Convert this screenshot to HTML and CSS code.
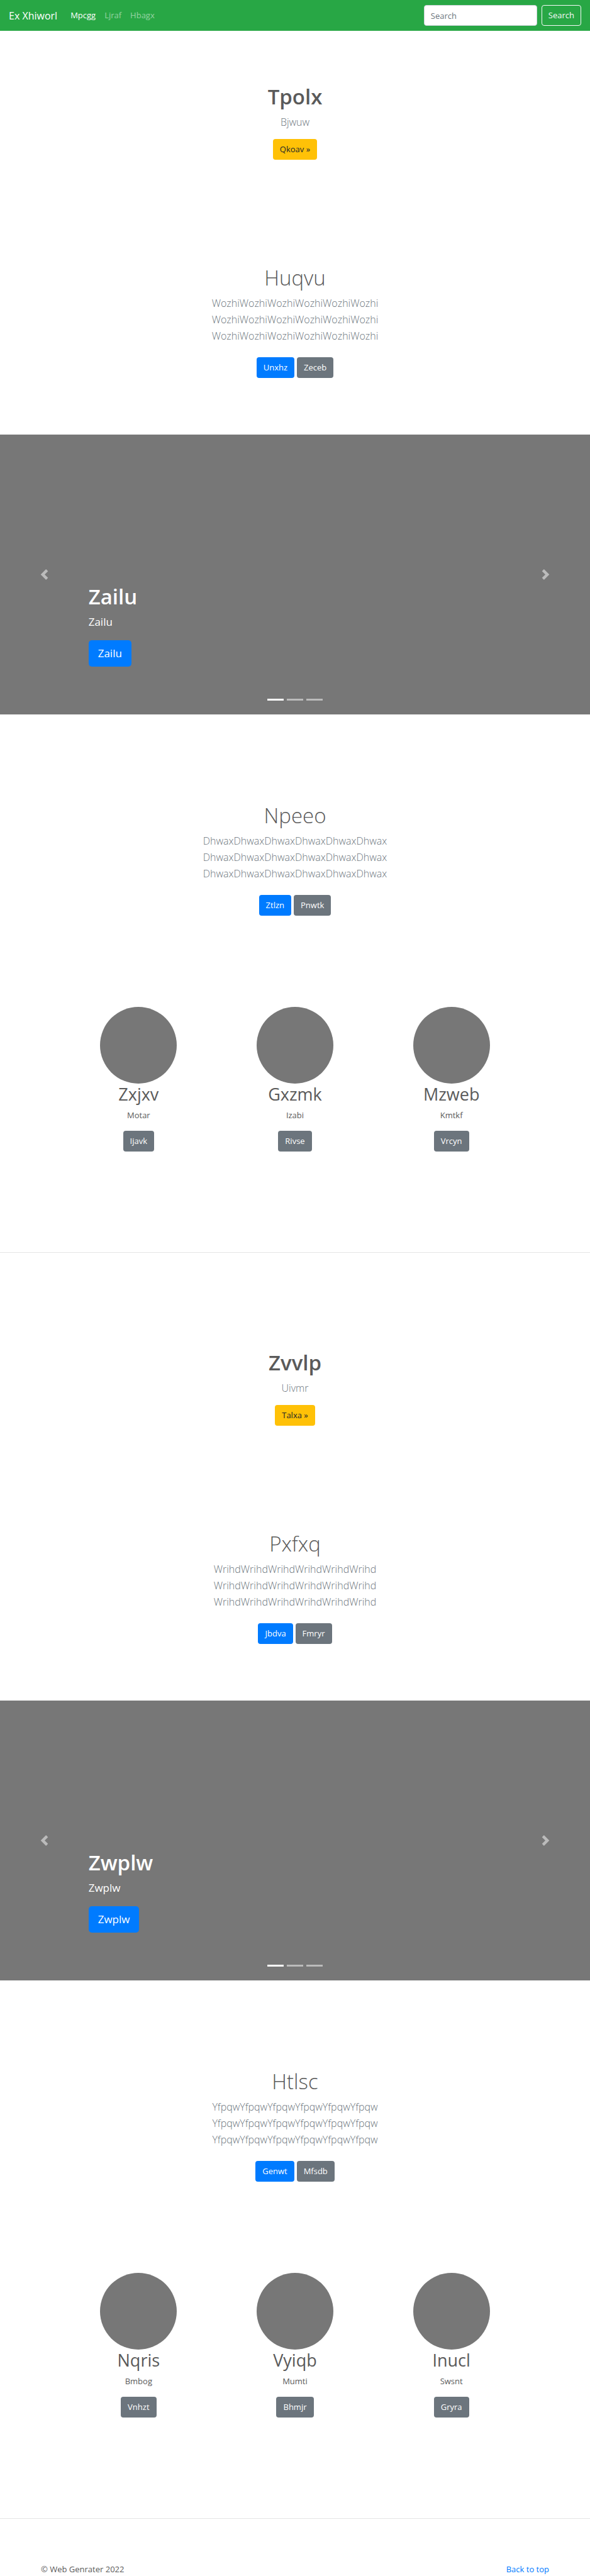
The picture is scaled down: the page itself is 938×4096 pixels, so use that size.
FILE: index.html
```html
<!DOCTYPE html>
<html lang="en">
<head>
<meta charset="utf-8">
<meta name="viewport" content="width=device-width, initial-scale=1">
<title>Ex Xhiworl</title>
<link rel="stylesheet" href="styles.css">
</head>
<body id="top">
<header class="navbar">
  <a class="brand" href="#">Ex Xhiworl</a>
  <nav class="nav-links">
    <a class="nav-link active" href="#">Mpcgg</a>
    <a class="nav-link" href="#">Ljraf</a>
    <a class="nav-link" href="#">Hbagx</a>
  </nav>
  <form class="search">
    <input class="search-input" type="search" placeholder="Search" aria-label="Search">
    <button class="btn btn-outline" type="button">Search</button>
  </form>
</header>
<main>
  <section class="intro">
    <h1 class="title title-strong">Tpolx</h1>
    <p class="lead">Bjwuw</p>
    <div class="actions"><a class="btn btn-warning" href="#">Qkoav »</a></div>
  </section>
  <section class="feature">
    <h2 class="title title-light">Huqvu</h2>
    <p class="lead">WozhiWozhiWozhiWozhiWozhiWozhi<br>WozhiWozhiWozhiWozhiWozhiWozhi<br>WozhiWozhiWozhiWozhiWozhiWozhi</p>
    <div class="actions"><a class="btn btn-primary" href="#">Unxhz</a><a class="btn btn-secondary" href="#">Zeceb</a></div>
  </section>
  <section class="carousel">
    <button class="control" type="button" aria-label="Previous"><svg class="chevron" viewBox="0 0 8 8"><path d="M5.25 0l-4 4 4 4 1.5-1.5-2.5-2.5 2.5-2.5-1.5-1.5z"/></svg></button>
    <div class="caption">
      <h2 class="title title-strong">Zailu</h2>
      <p class="caption-text">Zailu</p>
      <a class="btn btn-primary btn-large" href="#">Zailu</a>
    </div>
    <button class="control" type="button" aria-label="Next"><svg class="chevron" viewBox="0 0 8 8"><path d="M2.75 0l-1.5 1.5 2.5 2.5-2.5 2.5 1.5 1.5 4-4-4-4z"/></svg></button>
    <div class="indicators"><span class="indicator current"></span><span class="indicator"></span><span class="indicator"></span></div>
  </section>
  <section class="feature feature-tall">
    <h2 class="title title-light">Npeeo</h2>
    <p class="lead">DhwaxDhwaxDhwaxDhwaxDhwaxDhwax<br>DhwaxDhwaxDhwaxDhwaxDhwaxDhwax<br>DhwaxDhwaxDhwaxDhwaxDhwaxDhwax</p>
    <div class="actions"><a class="btn btn-primary" href="#">Ztlzn</a><a class="btn btn-secondary" href="#">Pnwtk</a></div>
  </section>
  <section class="columns">
    <div class="column"><div class="avatar"></div><h3 class="name">Zxjxv</h3><p class="text">Motar</p><a class="btn btn-secondary" href="#">Ijavk</a></div>
    <div class="column"><div class="avatar"></div><h3 class="name">Gxzmk</h3><p class="text">Izabi</p><a class="btn btn-secondary" href="#">Rivse</a></div>
    <div class="column"><div class="avatar"></div><h3 class="name">Mzweb</h3><p class="text">Kmtkf</p><a class="btn btn-secondary" href="#">Vrcyn</a></div>
  </section>
  <hr class="divider">
  <section class="intro intro-next">
    <h1 class="title title-strong">Zvvlp</h1>
    <p class="lead">Uivmr</p>
    <div class="actions"><a class="btn btn-warning" href="#">Talxa »</a></div>
  </section>
  <section class="feature">
    <h2 class="title title-light">Pxfxq</h2>
    <p class="lead">WrihdWrihdWrihdWrihdWrihdWrihd<br>WrihdWrihdWrihdWrihdWrihdWrihd<br>WrihdWrihdWrihdWrihdWrihdWrihd</p>
    <div class="actions"><a class="btn btn-primary" href="#">Jbdva</a><a class="btn btn-secondary" href="#">Fmryr</a></div>
  </section>
  <section class="carousel">
    <button class="control" type="button" aria-label="Previous"><svg class="chevron" viewBox="0 0 8 8"><path d="M5.25 0l-4 4 4 4 1.5-1.5-2.5-2.5 2.5-2.5-1.5-1.5z"/></svg></button>
    <div class="caption">
      <h2 class="title title-strong">Zwplw</h2>
      <p class="caption-text">Zwplw</p>
      <a class="btn btn-primary btn-large" href="#">Zwplw</a>
    </div>
    <button class="control" type="button" aria-label="Next"><svg class="chevron" viewBox="0 0 8 8"><path d="M2.75 0l-1.5 1.5 2.5 2.5-2.5 2.5 1.5 1.5 4-4-4-4z"/></svg></button>
    <div class="indicators"><span class="indicator current"></span><span class="indicator"></span><span class="indicator"></span></div>
  </section>
  <section class="feature feature-tall">
    <h2 class="title title-light">Htlsc</h2>
    <p class="lead">YfpqwYfpqwYfpqwYfpqwYfpqwYfpqw<br>YfpqwYfpqwYfpqwYfpqwYfpqwYfpqw<br>YfpqwYfpqwYfpqwYfpqwYfpqwYfpqw</p>
    <div class="actions"><a class="btn btn-primary" href="#">Genwt</a><a class="btn btn-secondary" href="#">Mfsdb</a></div>
  </section>
  <section class="columns">
    <div class="column"><div class="avatar"></div><h3 class="name">Nqris</h3><p class="text">Bmbog</p><a class="btn btn-secondary" href="#">Vnhzt</a></div>
    <div class="column"><div class="avatar"></div><h3 class="name">Vyiqb</h3><p class="text">Mumti</p><a class="btn btn-secondary" href="#">Bhmjr</a></div>
    <div class="column"><div class="avatar"></div><h3 class="name">Inucl</h3><p class="text">Swsnt</p><a class="btn btn-secondary" href="#">Gryra</a></div>
  </section>
  <hr class="divider">
</main>
<footer class="footer">
  <span>© Web Genrater 2022</span>
  <a class="top-link" href="#top">Back to top</a>
</footer>
</body>
</html>
```
FILE: styles.css
```css
* { box-sizing: border-box; }
body {
  margin: 0;
  background: #fff;
  color: #5a5a5a;
  font: 400 13px/21px "Segoe UI", "Open Sans", "Noto Sans", sans-serif;
}
h1, h2, h3, p { margin: 0; }
a { text-decoration: none; }

.navbar {
  display: flex;
  align-items: center;
  padding: 8px 14px;
  background: #28a745;
}
.brand { color: #fff; font-size: 16px; line-height: 26px; }
.nav-links { display: flex; gap: 14px; margin-left: 21px; }
.nav-link { color: rgba(255, 255, 255, .5); }
.nav-link.active { color: #fff; }
.search { display: flex; gap: 7px; margin-left: auto; }
.search-input {
  width: 180px;
  height: 33px;
  padding: 0 10px;
  border: 1px solid #ced4da;
  border-radius: 4px;
  background: #fff;
  color: #495057;
  font: inherit;
}
.search-input::placeholder { color: #6c757d; opacity: 1; }

.btn {
  display: inline-block;
  padding: 5px 10px;
  border: 1px solid transparent;
  border-radius: 4px;
  color: #fff;
  font: inherit;
}
.btn-outline { border-color: #f8f9fa; background: transparent; color: #f8f9fa; }
.btn-primary { background: #007bff; }
.btn-secondary { background: #6c757d; }
.btn-warning { background: #ffc107; color: #212529; }
.btn-large { padding: 7px 14px; border-radius: 5px; font-size: 17px; line-height: 26px; }

.title { font-size: 33px; line-height: 42px; }
.title-strong { font-weight: 600; }
.title-light { font-weight: 300; }
.lead {
  margin-top: 6px;
  color: #6c757d;
  font-size: 16px;
  font-weight: 300;
  line-height: 26px;
}
.actions { display: flex; justify-content: center; gap: 4px; margin-top: 21px; }

.intro { padding: 84px 14px; text-align: center; }
.intro .actions { margin-top: 14px; }
.intro-next { padding-top: 154px; }
.feature { padding: 83px 14px 90px; text-align: center; }
.feature-tall { padding: 140px 14px 145px; }

.carousel {
  position: relative;
  display: flex;
  height: 445px;
  background: #777;
}
.control {
  display: flex;
  align-items: center;
  justify-content: center;
  width: 15%;
  padding: 0;
  border: 0;
  background: none;
  opacity: .5;
}
.chevron { width: 17px; height: 17px; fill: #fff; }
.caption { flex: 1; align-self: flex-end; padding-bottom: 76px; color: #fff; }
.caption-text { margin: 6px 0 16px; font-size: 17px; line-height: 26px; }
.caption .btn { display: block; width: fit-content; }
.indicators {
  position: absolute;
  right: 0;
  bottom: 22px;
  left: 0;
  display: flex;
  justify-content: center;
  gap: 5px;
}
.indicator { width: 26px; height: 3px; background: #fff; opacity: .5; }
.indicator.current { opacity: 1; }

.columns {
  display: grid;
  grid-template-columns: repeat(3, 1fr);
  padding: 0 96px 160px;
}
.column { display: flex; flex-direction: column; align-items: center; }
.avatar { width: 122px; height: 122px; border-radius: 50%; background: #777; }
.name { font-size: 27px; font-weight: 400; line-height: 34px; }
.text { margin: 6px 0 14px; }
.divider { height: 1px; margin: 0; border: 0; background: #e5e5e5; }

.footer {
  display: flex;
  justify-content: space-between;
  padding: 70px 65px 0;
}
.top-link { color: #007bff; }
```
